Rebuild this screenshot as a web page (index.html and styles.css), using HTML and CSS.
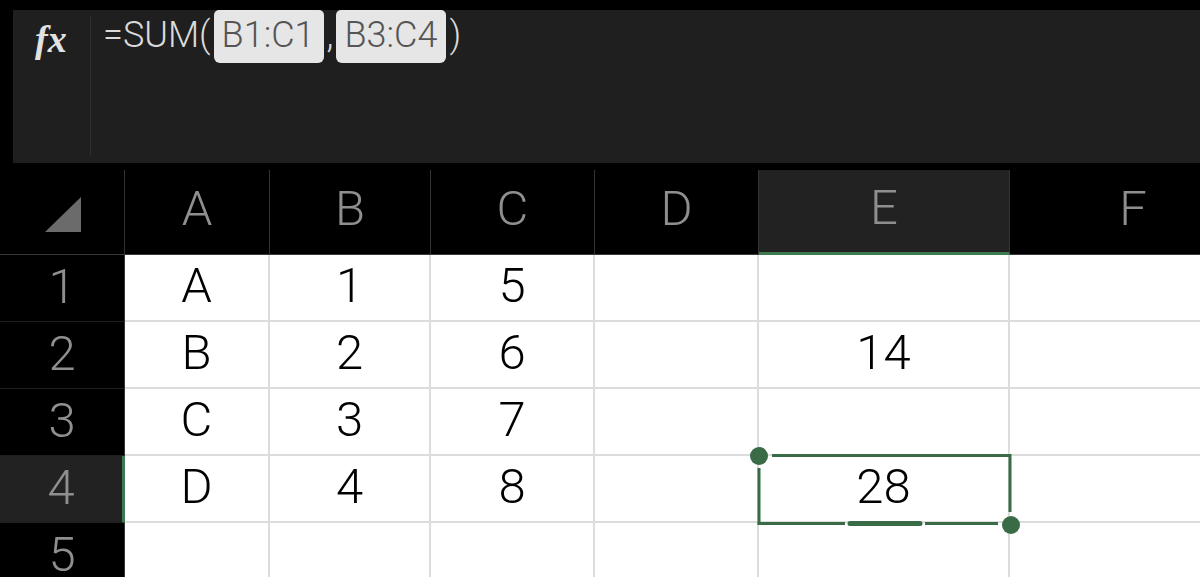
FILE: index.html
```html
<!DOCTYPE html>
<html lang="ja">
<head>
<meta charset="utf-8">
<title>Excel SUM</title>
<link rel="stylesheet" href="styles.css">
</head>
<body>
<div class="formula-bar">
  <div class="fx">fx</div>
  <div class="formula">
    <span class="ftext">=SUM(</span><span class="chip">B1:C1</span><span class="ftext">,</span><span class="chip">B3:C4</span><span class="ftext">)</span>
  </div>
</div>
<div class="sheet">
  <div class="corner"><svg width="36" height="35" viewBox="0 0 36 35"><polygon points="0,35 36,35 36,0" fill="#6b6b6b"/></svg></div>
  <div class="colh">A</div>
  <div class="colh">B</div>
  <div class="colh">C</div>
  <div class="colh">D</div>
  <div class="colh sel">E</div>
  <div class="colh last">F</div>

  <div class="rowh">1</div>
  <div class="cell">A</div><div class="cell">1</div><div class="cell">5</div><div class="cell"></div><div class="cell"></div><div class="cell"></div>

  <div class="rowh">2</div>
  <div class="cell">B</div><div class="cell">2</div><div class="cell">6</div><div class="cell"></div><div class="cell">14</div><div class="cell"></div>

  <div class="rowh">3</div>
  <div class="cell">C</div><div class="cell">3</div><div class="cell">7</div><div class="cell"></div><div class="cell"></div><div class="cell"></div>

  <div class="rowh sel">4</div>
  <div class="cell">D</div><div class="cell">4</div><div class="cell">8</div><div class="cell"></div><div class="cell">28</div><div class="cell"></div>

  <div class="rowh">5</div>
  <div class="cell"></div><div class="cell"></div><div class="cell"></div><div class="cell"></div><div class="cell"></div><div class="cell"></div>

  <svg class="selection" width="290" height="100" viewBox="740 440 290 100">
    <line x1="772" y1="455.5" x2="1010" y2="455.5" stroke="#3a6b47" stroke-width="3"/>
    <line x1="1010" y1="454" x2="1010" y2="512" stroke="#3a6b47" stroke-width="3"/>
    <line x1="759" y1="468" x2="759" y2="524" stroke="#3a6b47" stroke-width="3"/>
    <line x1="757.5" y1="523.5" x2="845" y2="523.5" stroke="#3a6b47" stroke-width="3"/>
    <line x1="925" y1="523.5" x2="998" y2="523.5" stroke="#3a6b47" stroke-width="3"/>
    <line x1="850" y1="523.5" x2="920" y2="523.5" stroke="#3a6b47" stroke-width="5" stroke-linecap="round"/>
    <circle cx="759" cy="456" r="9" fill="#3a6b47"/>
    <circle cx="1011" cy="525" r="9" fill="#3a6b47"/>
  </svg>
</div>
</body>
</html>
```

FILE: styles.css
```css
* { box-sizing: border-box; }
html, body {
  margin: 0;
  padding: 0;
  background: #000;
  width: 1200px;
  height: 577px;
  overflow: hidden;
  font-family: Roboto, "Noto Sans", "Noto Sans CJK JP", sans-serif;
}
.formula-bar {
  margin: 10px 0 0 13px;
  height: 153px;
  background: #1f1f1f;
  display: flex;
}
.fx {
  width: 78px;
  flex: none;
  border-right: 1px dotted #3c3c3c;
  margin: 6px 0 8px 0;
  font-family: "Liberation Serif", "DejaVu Serif", serif;
  font-style: italic;
  font-weight: bold;
  font-size: 38px;
  color: #e2e2e2;
  padding: 4px 0 0 22px;
  line-height: 38px;
}
.formula {
  display: flex;
  align-items: flex-start;
  padding: 3px 0 0 12px;
  font-size: 36px;
  font-weight: 300;
  line-height: 40px;
  color: #dadada;
}
.ftext {
  padding-top: 2px;
}
.chip {
  background: #e6e6e6;
  color: #555;
  border-radius: 5px 5px 6px 6px;
  height: 53px;
  margin: 0 3px;
  margin-top: -3px;
  padding: 5px 9px 0 8px;
}
.sheet {
  position: relative;
  margin-top: 7px;
  display: grid;
  grid-template-columns: 125px 145px 161px 164px 164px 251px 246px;
  grid-template-rows: 85px 67px 67px 67px 67px 67px;
  font-weight: 300;
}
.corner {
  border-right: 1px solid #333;
  border-bottom: 1px solid #3a3a3a;
  display: flex;
  align-items: flex-end;
  padding: 0 0 22px 45px;
}
.colh {
  border-right: 1px solid #333;
  border-bottom: 1px solid #3a3a3a;
  color: #8f8f8f;
  font-size: 49px;
  display: flex;
  align-items: center;
  justify-content: center;
  padding-bottom: 8px;
}
.colh.last { border-right: none; }
.colh.sel {
  background: #222;
  border-bottom: 3px solid #3e7a4f;
}
.rowh {
  border-right: 1px solid #333;
  border-bottom: 1px solid #1e1e1e;
  color: #8f8f8f;
  font-size: 49px;
  display: flex;
  align-items: center;
  justify-content: center;
  padding-bottom: 4px;
}
.rowh.sel {
  background: #222;
  border-right: 3px solid #3e7a4f;
}
.cell {
  background: #fff;
  border-right: 2px solid #dcdcdc;
  border-bottom: 2px solid #dcdcdc;
  color: #000;
  font-size: 49px;
  display: flex;
  align-items: center;
  justify-content: center;
  padding-bottom: 4px;
}
.selection {
  position: absolute;
  left: 740px;
  top: 270px;
}
```
